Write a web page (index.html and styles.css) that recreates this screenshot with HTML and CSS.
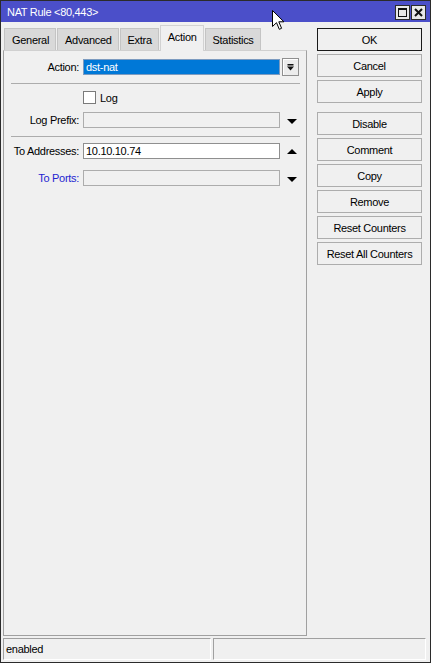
FILE: index.html
```html
<!DOCTYPE html>
<html>
<head>
<meta charset="utf-8">
<title>NAT Rule</title>
<link rel="stylesheet" href="styles.css">
</head>
<body>
<div class="window">
  <div class="titlebar">
    <span class="title">NAT Rule &lt;80,443&gt;</span>
    <div class="title-buttons">
      <span class="tbtn">
        <svg width="13" height="13" viewBox="0 0 13 13"><path d="M2 2h9v9H2z M3 4h7v6H3z" fill="#111" fill-rule="evenodd"/></svg>
      </span>
      <span class="tbtn">
        <svg width="13" height="13" viewBox="0 0 13 13"><path d="M3 3l7 7M10 3l-7 7" stroke="#111" stroke-width="2"/></svg>
      </span>
    </div>
  </div>

  <div class="main">
    <div class="left">
      <div class="tabs">
        <div class="tab">General</div>
        <div class="tab">Advanced</div>
        <div class="tab">Extra</div>
        <div class="tab tab-active">Action</div>
        <div class="tab">Statistics</div>
      </div>
      <div class="panel">
        <div class="row row-action">
          <label class="lbl">Action:</label>
          <div class="field field-selected">dst-nat</div>
          <span class="dd-btn">
            <svg width="7" height="7" viewBox="0 0 7 7"><path d="M0.5 0h6v1.5h-6z M0 2.5h7L3.5 6.5z" fill="#111"/></svg>
          </span>
        </div>
        <div class="sep sep-first"></div>
        <div class="row row-check">
          <span class="checkbox"></span>
          <span class="check-label">Log</span>
        </div>
        <div class="row row-prefix">
          <label class="lbl">Log Prefix:</label>
          <div class="field field-disabled"></div>
          <span class="tri tri-down"></span>
        </div>
        <div class="sep sep-second"></div>
        <div class="row row-addr">
          <label class="lbl">To Addresses:</label>
          <div class="field">10.10.10.74</div>
          <span class="tri tri-up"></span>
        </div>
        <div class="row row-ports">
          <label class="lbl lbl-link">To Ports:</label>
          <div class="field field-disabled"></div>
          <span class="tri tri-down"></span>
        </div>
      </div>
    </div>

    <div class="actions">
      <button class="btn btn-default">OK</button>
      <button class="btn">Cancel</button>
      <button class="btn">Apply</button>
      <button class="btn btn-group">Disable</button>
      <button class="btn">Comment</button>
      <button class="btn">Copy</button>
      <button class="btn">Remove</button>
      <button class="btn">Reset Counters</button>
      <button class="btn">Reset All Counters</button>
    </div>
  </div>

  <div class="statusbar">
    <div class="seg seg-left">enabled</div>
    <div class="seg seg-right"></div>
  </div>

  <svg class="cursor" width="13" height="21" viewBox="0 0 13 21">
    <path d="M0.5 0.5V16.5L4.5 12.7L7.3 19.3L9.6 18.3L6.8 11.8H11.9Z" fill="#fff" stroke="#000" stroke-width="1" stroke-linejoin="miter"/>
  </svg>
</div>
</body>
</html>
```

FILE: styles.css
```css
* {
  box-sizing: border-box;
}

html, body {
  margin: 0;
  padding: 0;
  background: #f0f0f0;
}

body {
  font-family: "Liberation Sans", Arial, sans-serif;
  font-size: 11px;
  letter-spacing: -0.3px;
  color: #000;
}

.window {
  position: relative;
  width: 431px;
  height: 663px;
  border: 1px solid #2b2b2b;
  background: #f0f0f0;
  display: flex;
  flex-direction: column;
}

/* title bar */
.titlebar {
  height: 21px;
  background: #4b4fc9;
  display: flex;
  align-items: center;
  justify-content: space-between;
  padding: 0 4px 0 6px;
  flex: none;
}

.title {
  color: #fff;
  font-size: 11px;
  padding-top: 1px;
}

.title-buttons {
  display: flex;
  gap: 1px;
  padding-top: 2px;
}

.tbtn {
  width: 15px;
  height: 15px;
  border: 1px solid #2b2b2b;
  background: #e8e8e8;
  display: flex;
  align-items: center;
  justify-content: center;
}

/* body */
.main {
  flex: 1;
  display: flex;
  min-height: 0;
  padding-left: 2px;
}

.left {
  width: 304px;
  display: flex;
  flex-direction: column;
}

.tabs {
  height: 28px;
  display: flex;
  align-items: flex-end;
  padding-left: 1px;
  position: relative;
  z-index: 1;
}

.tab {
  height: 22px;
  padding: 0 6px 0 7px;
  margin-right: 1px;
  background: #d9d9d9;
  border: 1px solid #c4c4c4;
  border-bottom: none;
  display: flex;
  align-items: center;
  padding-top: 1px;
}

.tab-active {
  height: 26px;
  margin-bottom: -1px;
  background: #f0f0f0;
  border-color: #d2d2d2;
  padding-top: 0;
  padding-bottom: 3px;
}

.panel {
  flex: 1;
  border: 1px solid #a0a0a0;
  border-top-color: #d0d0d0;
  padding-top: 7px;
}

.row {
  display: flex;
  align-items: center;
}

.row-action {
  height: 18px;
}

.row-check {
  height: 13px;
  margin-top: 7px;
  padding-left: 79px;
}

.row-prefix {
  height: 16px;
  margin-top: 8px;
}

.row-addr {
  height: 16px;
  margin-top: 6px;
}

.row-ports {
  height: 16px;
  margin-top: 11px;
}

.lbl {
  width: 79px;
  padding-right: 4px;
  text-align: right;
  flex: none;
}

.lbl-link {
  color: #2424d0;
}

.field {
  width: 197px;
  height: 16px;
  border: 1px solid #8f8f8f;
  background: #fff;
  padding-left: 2px;
  line-height: 14px;
  flex: none;
}

.field-selected {
  background: #0078d7;
  border-color: #7c9bc0;
  color: #fff;
}

.field-disabled {
  background: #f0f0f0;
  border-color: #acacac;
}

.dd-btn {
  width: 17px;
  height: 18px;
  margin-left: 2px;
  border: 1px solid #8f8f8f;
  background: #ececec;
  box-shadow: inset 1px 1px 0 #fff;
  display: flex;
  align-items: center;
  justify-content: center;
}

.tri {
  width: 0;
  height: 0;
  margin-left: 7px;
  border-left: 5px solid transparent;
  border-right: 5px solid transparent;
}

.tri-down {
  border-top: 5px solid #000;
  margin-top: 2px;
}

.tri-up {
  border-bottom: 5px solid #000;
}

.sep {
  margin-left: 7px;
  width: 289px;
  height: 1px;
  background: #acacac;
}

.sep-first {
  margin-top: 7px;
}

.sep-second {
  margin-top: 8px;
}

.checkbox {
  width: 13px;
  height: 13px;
  border: 1px solid #7a7a7a;
  background: #fff;
}

.check-label {
  margin-left: 4px;
}

/* command buttons */
.actions {
  margin-left: 10px;
  width: 105px;
  padding-top: 6px;
  display: flex;
  flex-direction: column;
}

.btn {
  height: 23px;
  margin-bottom: 3px;
  border: 1px solid #adadad;
  background: #f0f0f0;
  font: inherit;
  letter-spacing: inherit;
  color: #000;
  padding: 0;
}

.btn-default {
  border-color: #1a1a1a;
}

.btn-group {
  margin-top: 6px;
}

/* status bar */
.statusbar {
  flex: none;
  height: 22px;
  margin: 2px 0 2px;
  padding: 0 4px 0 2px;
  display: flex;
  gap: 2px;
}

.seg {
  border-top: 1px solid #a0a0a0;
  border-left: 1px solid #a0a0a0;
  border-right: 1px solid #fff;
  border-bottom: 1px solid #fff;
  display: flex;
  align-items: center;
  padding-left: 2px;
}

.seg-left {
  width: 208px;
}

.seg-right {
  flex: 1;
}

.cursor {
  position: absolute;
  left: 271px;
  top: 9px;
}
```
